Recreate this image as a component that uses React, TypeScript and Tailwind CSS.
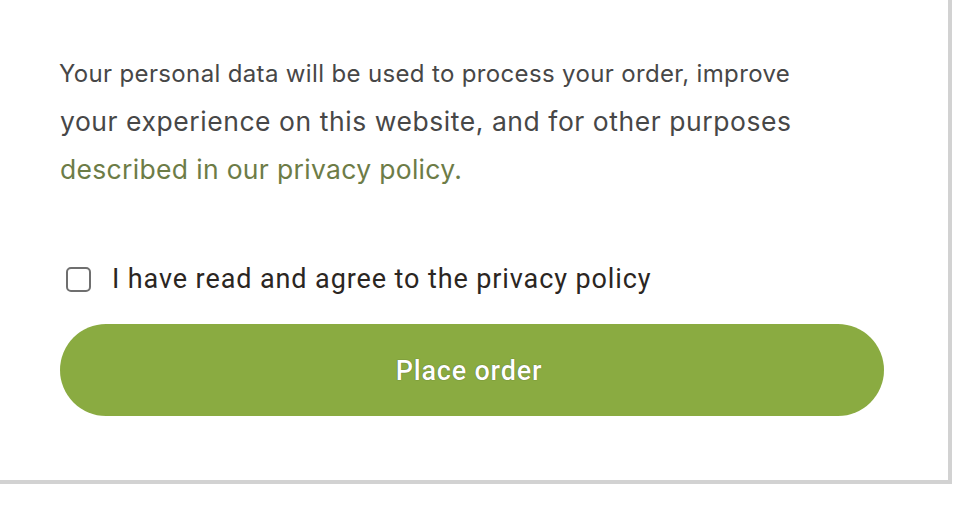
export default function App() {
  return (
    <div className="w-[958px] h-[510px] bg-white">
      <div className="w-[952px] h-[484px] border-r-4 border-b-4 border-[#d2d2d2] bg-white pl-[60px] pr-[64px] pt-[51px] font-['Inter',sans-serif]">
        <p className="text-[#474747]">
          <span className="block -ml-px text-[24px] leading-[46px] tracking-[0.35px]">
            Your personal data will be used to process your order, improve
          </span>
          <span className="block text-[26.5px] leading-[48px] tracking-[0.55px]">
            your experience on this website, and for other purposes
          </span>
          <a href="#" className="block text-[26.5px] leading-[48px] text-[#6d7c47] tracking-[0.32px]">
            described in our privacy policy.
          </a>
        </p>

        <label className="mt-[66px] flex items-center gap-[21px] pl-[6px] font-['Roboto',sans-serif] text-[27px] tracking-[0.9px] text-[#2b2622]">
          <span className="h-[25px] w-[25px] shrink-0 rounded-[5px] border-2 border-[#6f6f6f] bg-white" />
          I have read and agree to the privacy policy
        </label>

        <button
          type="button"
          className="mt-[24px] flex h-[92px] w-[824px] items-center justify-center rounded-full bg-[#8aab41] pt-[4px] pr-[6px] font-['Roboto',sans-serif] text-[27px] font-medium tracking-[0.8px] text-white [text-shadow:0_0_1px_rgba(0,0,0,0.6)]"
        >
          Place order
        </button>
      </div>
    </div>
  );
}
